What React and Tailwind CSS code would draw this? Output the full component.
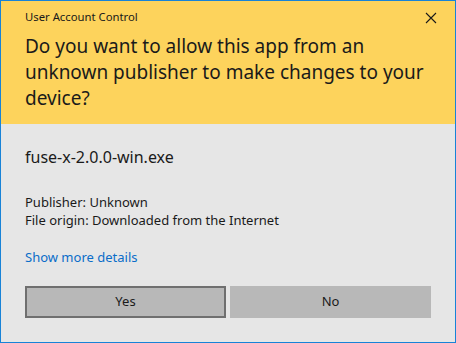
export default function App() {
  return (
    <div
      className="w-[456px] h-[343px] border border-[#1883d7] bg-[#e6e6e6] flex flex-col text-[#1a1a1a]"
      style={{ fontFamily: '"Noto Sans", "Open Sans", sans-serif' }}
    >
      {/* Yellow header */}
      <div className="bg-[#fdd35c] h-[123px] pl-6 pr-[14px] flex flex-col">
        <div className="flex items-start justify-between pt-[6px] h-[32px]">
          <span className="text-[11.3px] leading-[20px]">User Account Control</span>
          <svg width="12" height="12" viewBox="0 0 12 12" className="mt-[5px] mr-[4px]">
            <path d="M1 1 L11 11 M11 1 L1 11" stroke="#1a1a1a" strokeWidth="1.1" />
          </svg>
        </div>
        <p className="text-[19px] leading-[26px] whitespace-nowrap">
          Do you want to allow this app from an
          <br />
          unknown publisher to make changes to your
          <br />
          device?
        </p>
      </div>

      {/* Body */}
      <div className="flex flex-col px-6 pt-[21px]">
        <div className="text-[16px] leading-[24px]">fuse-x-2.0.0-win.exe</div>
        <div className="mt-[24px] text-[13px] leading-[18px]">
          <div>Publisher: Unknown</div>
          <div>File origin: Downloaded from the Internet</div>
        </div>
        <div className="mt-[19px] text-[13px] leading-[18px] text-[#0a6dc9]">Show more details</div>
        <div className="mt-[20px] flex gap-1">
          <button className="w-[201px] h-[32px] bg-[#b8b8b8] border-2 border-[#6f6f6f] text-[13px]">
            Yes
          </button>
          <button className="w-[201px] h-[32px] bg-[#b8b8b8] text-[13px]">No</button>
        </div>
      </div>
    </div>
  );
}
